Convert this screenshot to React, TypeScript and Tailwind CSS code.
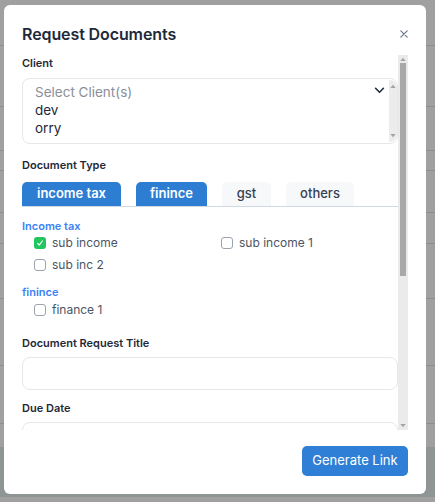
import { useState } from 'react'

const bgLines = [45, 106, 150, 170, 212, 243, 298, 365, 423]

const tabs = [
  { label: 'income tax', active: true, w: 'w-[99px]' },
  { label: 'finince', active: true, w: 'w-[71px]' },
  { label: 'gst', active: false, w: 'w-[49px]' },
  { label: 'others', active: false, w: 'w-[68px]' },
]

function Checkbox({ checked = false, label }: { checked?: boolean; label: string }) {
  return (
    <label className="flex items-center gap-[6px] text-[12px] leading-[16px] text-[#4b5563]">
      {checked ? (
        <span className="flex h-[12px] w-[12px] items-center justify-center rounded-[3px] bg-[#22c55e]">
          <svg viewBox="0 0 12 12" className="h-[8px] w-[8px]">
            <path d="M2.5 6.5 L5 9 L9.5 3" fill="none" stroke="white" strokeWidth="1.8" strokeLinecap="round" strokeLinejoin="round" />
          </svg>
        </span>
      ) : (
        <span className="h-[12px] w-[12px] rounded-[3px] border border-[#9ca3af] bg-white" />
      )}
      <span>{label}</span>
    </label>
  )
}

function TinyArrow({ up }: { up?: boolean }) {
  return (
    <svg viewBox="0 0 8 6" className="h-[4px] w-[6px]">
      <path d={up ? 'M0 6 L4 1 L8 6 Z' : 'M0 0 L4 5 L8 0 Z'} fill="#a3a3a3" />
    </svg>
  )
}

export default function App() {
  const [title, setTitle] = useState('')

  return (
    <div
      className="relative h-[502px] w-[435px] overflow-hidden bg-[#a0a0a0]"
      style={{ fontFamily: 'Inter, "Noto Sans", sans-serif' }}
    >
      {/* page behind the overlay */}
      {bgLines.map((y) => (
        <div key={y} className="absolute left-0 right-0 h-px bg-[#8e8e8e]" style={{ top: y }} />
      ))}
      <div className="absolute left-0 right-0 top-[447px] h-[50px] bg-[#8f9494]" />

      {/* Modal */}
      <div className="absolute left-[4px] top-[5px] flex h-[489px] w-[422px] flex-col rounded-[6px] bg-white">
        {/* Header */}
        <div className="flex h-[50px] shrink-0 items-end justify-between pb-[10px] pl-[18px] pr-[18px]">
          <h2 className="text-[16px] font-semibold leading-[22px] tracking-[-0.1px] text-[#1e293b]">
            Request Documents
          </h2>
          <button className="mb-[7px] text-[#64748b]">
            <svg viewBox="0 0 10 10" className="h-[8px] w-[8px]">
              <path d="M1 1 L9 9 M9 1 L1 9" stroke="currentColor" strokeWidth="1.4" strokeLinecap="round" />
            </svg>
          </button>
        </div>

        {/* Body */}
        <div className="mx-[18px] flex h-[375px] shrink-0">
          <div className="flex h-full flex-1 flex-col overflow-hidden [&>*]:shrink-0">
            <div className="text-[11px] font-semibold leading-[16px] text-[#1f2937]">Client</div>

            {/* multi select */}
            <div className="mt-[7px] flex h-[66px] rounded-[8px] border border-[#e5e7eb] bg-white">
              <div className="flex flex-1 flex-col pl-[12px] pt-[4px] text-[13.5px] leading-[18px]">
                <span className="text-[#8a8f98]">Select Client(s)</span>
                <span className="text-[#1f2937]">dev</span>
                <span className="text-[#1f2937]">orry</span>
              </div>
              <div className="flex pt-[8px]">
                <svg viewBox="0 0 12 8" className="mr-[4px] h-[7px] w-[11px]">
                  <path d="M1.5 1.5 L6 6 L10.5 1.5" fill="none" stroke="#1e293b" strokeWidth="1.8" strokeLinecap="round" strokeLinejoin="round" />
                </svg>
              </div>
              <div className="my-[1px] flex w-[8px] flex-col items-center justify-between rounded-r-[7px] bg-[#ececec] py-[4px]">
                <TinyArrow up />
                <TinyArrow />
              </div>
            </div>

            <div className="mt-[13px] text-[11px] font-semibold leading-[16px] text-[#1f2937]">Document Type</div>

            {/* tabs */}
            <div className="mt-[9px] flex gap-[15px] border-b border-[#cfd8e3]">
              {tabs.map((t) => (
                <div
                  key={t.label}
                  className={
                    t.active
                      ? `flex h-[24px] ${t.w} items-center justify-center rounded-t-[5px] bg-[#2d7dd2] text-[13px] font-semibold text-white`
                      : `flex h-[24px] ${t.w} items-center justify-center rounded-t-[5px] bg-[#f6f8fa] text-[13px] font-medium text-[#374151]`
                  }
                >
                  {t.label}
                </div>
              ))}
            </div>

            <div className="mt-[11px] text-[11px] font-semibold leading-[16px] text-[#3b82f6]">Income tax</div>
            <div className="mt-[1px] grid grid-cols-[187px_1fr] gap-y-[6px] pl-[12px]">
              <Checkbox checked label="sub income" />
              <Checkbox label="sub income 1" />
              <Checkbox label="sub inc 2" />
            </div>

            <div className="mt-[11px] text-[11px] font-semibold leading-[16px] text-[#3b82f6]">finince</div>
            <div className="mt-[2px] pl-[12px]">
              <Checkbox label="finance 1" />
            </div>

            <div className="mt-[17px] text-[11px] font-semibold leading-[16px] text-[#1f2937]">
              Document Request Title
            </div>
            <input
              value={title}
              onChange={(e) => setTitle(e.target.value)}
              className="mt-[6px] h-[33px] w-full rounded-[8px] border border-[#e5e7eb] px-[10px] text-[13px] outline-none"
            />

            <div className="mt-[10px] text-[11px] font-semibold leading-[16px] text-[#1f2937]">Due Date</div>
            <div className="mt-[6px] h-[33px] w-full rounded-[8px] border border-[#e5e7eb]" />
          </div>

          {/* scrollbar */}
          <div className="flex h-full w-[10px] flex-col items-center bg-[#ebebeb]">
            <div className="flex h-[8px] items-center">
              <TinyArrow up />
            </div>
            <div className="h-[213px] w-[6px] bg-[#a8a8a8]" />
            <div className="flex-1" />
            <div className="flex h-[8px] items-center">
              <TinyArrow />
            </div>
          </div>
        </div>

        {/* Footer */}
        <div className="flex flex-1 items-start justify-end pr-[18px] pt-[16px]">
          <button className="h-[30px] w-[106px] rounded-[5px] bg-[#2f7fd6] text-[13px] text-white">
            Generate Link
          </button>
        </div>
      </div>
    </div>
  )
}
